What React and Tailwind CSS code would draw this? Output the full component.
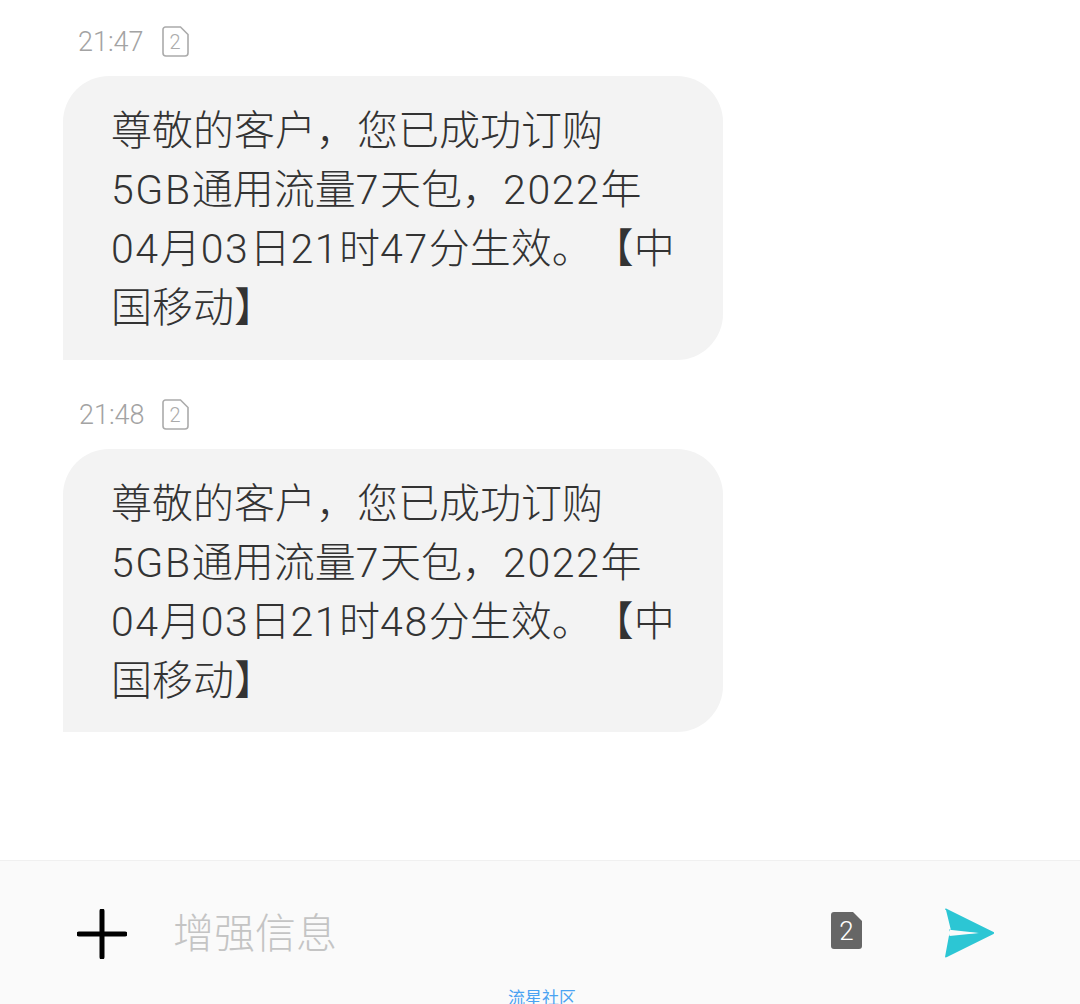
const FONT = "font-['Roboto','Noto_Sans_CJK_SC',sans-serif]";

function N({ children }) {
  return <span className="tracking-[1.6px]">{children}</span>;
}

function SimIcon({ filled = false, className = "" }) {
  if (filled) {
    return (
      <div className={`relative flex items-center justify-center ${className}`}>
        <svg width="31" height="37" viewBox="0 0 31 37" className="absolute inset-0">
          <path d="M3 0H22L31 9V34a3 3 0 0 1-3 3H3a3 3 0 0 1-3-3V3a3 3 0 0 1 3-3Z" fill="#666666" />
        </svg>
        <span className="relative text-[26px] leading-none font-light text-white">2</span>
      </div>
    );
  }
  return (
    <div className={`relative flex items-center justify-center ${className}`}>
      <svg width="27" height="31" viewBox="0 0 27 31" className="absolute inset-0">
        <path d="M3.5 1H18.5L26 8.5V27a3 3 0 0 1-3 3H4a3 3 0 0 1-3-3V3.500a2.500 2.500 0 0 1 2.500-2.500Z" fill="none" stroke="#ababab" strokeWidth="1.6" />
      </svg>
      <span className="relative text-[20px] leading-none font-light text-[#ababab]">2</span>
    </div>
  );
}

function Message({ time, stamp, timeClass, iconClass, bubbleClass }) {
  return (
    <section>
      <div className={`flex items-center h-[31px] ${timeClass}`}>
        <span className="text-[27px] leading-none font-light text-[#a3a3a3] pt-[1px]">{time}</span>
        <SimIcon className={`w-[27px] h-[31px] ${iconClass}`} />
      </div>
      <div className={`w-[660px] bg-[#f3f3f3] rounded-t-[46px] rounded-br-[46px] pl-[48px] pt-[26px] text-[41px] leading-[59px] font-light text-[#333333] whitespace-nowrap [text-spacing-trim:space-all] ${bubbleClass}`}>
        <div>尊敬的客户，您已成功订购</div>
        <div><N>5GB</N>通用流量<N>7</N>天包，<N>2022</N>年</div>
        <div><N>04</N>月<N>03</N>日<N>21</N>时<N>{stamp}</N>分生效。【中</div>
        <div>国移动】</div>
      </div>
    </section>
  );
}

export default function App() {
  return (
    <div className={`w-[1080px] h-[1004px] bg-white overflow-hidden flex flex-col ${FONT}`}>
      <main className="flex-1 pt-[26px] pl-[63px]">
        <Message time="21:47" stamp="47" timeClass="pl-[15px]" iconClass="ml-[18px]" bubbleClass="mt-[19px] h-[284px]" />
        <div className="h-[39px]" />
        <Message time="21:48" stamp="48" timeClass="pl-[16px]" iconClass="ml-[17px]" bubbleClass="mt-[19px] h-[283px]" />
      </main>
      <footer className="relative h-[144px] bg-[#fafafa] border-t border-[#f0f0f0] flex items-start pt-[47px]">
        <svg width="50" height="50" viewBox="0 0 50 50" className="ml-[77px] mt-[1px]">
          <path d="M25 2V48M2 25H48" stroke="#000" strokeWidth="5" strokeLinecap="round" />
        </svg>
        <span className="ml-[46px] text-[41px] leading-[52px] font-light text-[#c4c4c4]">增强信息</span>
        <SimIcon filled className="ml-auto w-[31px] h-[37px] mt-[4px]" />
        <svg width="52" height="50" viewBox="0 0 52 50" className="ml-[81px] mr-[85px]">
          <path d="M2 1.500C2 .8 2.800.3 3.500.7L50.500 24C51.300 24.400 51.300 25.300 50.500 25.500L8 22.500 3 2Z" fill="#2cc6d4" />
          <path d="M6 21.500L48 24.500C51.500 24.800 51.500 25.700 50 26.200L3.500 49.300C2.700 49.700 2 49.200 2.100 48.400L6 27.500C6.200 26.900 6.500 26.600 7 26.500L35 25 7 23.400C6.500 23.300 6.100 23 6 22.500Z" fill="#2cc6d4" />
          <path d="M6.500 21.800L36 25 6.500 28Z" fill="#fafafa" />
        </svg>
        <span className="absolute left-[508px] top-[127px] text-[17px] leading-[20px] text-[#4aa3f2]">流星社区</span>
      </footer>
    </div>
  );
}
